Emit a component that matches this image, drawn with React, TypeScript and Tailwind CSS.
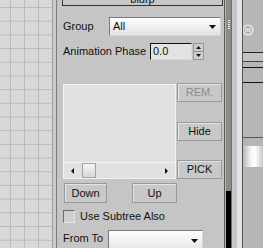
import React from 'react';

const DownArrow = ({ w = 7 }: { w?: number }) => (
  <svg width={w} height="4" viewBox="0 0 7 4">
    <path d="M0 0h7L3.5 4z" fill="#111" />
  </svg>
);

const Button = ({ label, disabled, className = '' }: { label: string; disabled?: boolean; className?: string }) => (
  <div
    className={`flex shrink-0 items-center justify-center border border-[#9a9a9a] bg-[#c8c8c8] shadow-[inset_1px_1px_0_#e4e4e4] ${
      disabled ? 'text-[#8c8c8c]' : 'text-[#111]'
    } ${className}`}
  >
    {label}
  </div>
);

const Dropdown = ({ text, className = '' }: { text?: string; className?: string }) => (
  <div
    className={`flex shrink-0 items-center justify-between border border-[#7a7a7a] border-r-[#d6d6d6] border-b-[#d6d6d6] bg-[linear-gradient(to_bottom,#fdfdfd,#e2e2e2)] pl-[3px] pr-[4px] ${className}`}
  >
    <span>{text}</span>
    <DownArrow />
  </div>
);

export default function App() {
  return (
    <div className="flex h-[248px] w-[263px] overflow-hidden bg-[#c5c5c5] font-['Liberation_Sans',Arial,sans-serif] text-[11px] leading-none text-[#111]">
      {/* viewport grid */}
      <div className="h-full w-[52px] shrink-0 bg-[#d8d8d8] bg-[linear-gradient(to_right,#bababa_1px,transparent_1px),linear-gradient(to_bottom,#bababa_1px,transparent_1px)] bg-[size:14px_13.7px] bg-[position:10px_7px]" />

      {/* splitter */}
      <div className="h-full w-[5px] shrink-0 border-l border-r border-l-[#9e9e9e] border-r-[#7c7c7c] bg-[#cbcbcb]" />

      {/* command panel */}
      <div className="flex w-[167px] shrink-0 flex-col pl-[5px] [&>*]:shrink-0">
        {/* rollout title */}
        <div className="-mt-[13px] flex h-[19px] w-[161px] items-end border border-[#333] bg-[#c8c8c8] px-[2px]">
          <span className="w-[8px] pb-[4px]">-</span>
          <span className="flex-1 text-center">blurp</span>
          <span className="w-[8px]" />
        </div>

        {/* group */}
        <div className="mt-[11px] flex items-center pl-[1px]">
          <span className="w-[46px]">Group</span>
          <Dropdown text="All" className="h-[19px] w-[112px]" />
        </div>

        {/* animation phase */}
        <div className="mt-[7px] flex items-center pl-[1px]">
          <span className="w-[87px]">Animation Phase</span>
          <div className="flex h-[17px] w-[42px] items-center border border-t-[#111] border-l-[#111] border-r-[#d8d8d8] border-b-[#d8d8d8] bg-[#e3e3e3] pl-[2px]">
            0.0
          </div>
          <div className="ml-[1px] flex h-[17px] w-[11px] flex-col border border-[#9a9a9a] bg-[#cdcdcd]">
            <div className="flex flex-1 items-center justify-center border-b border-[#8a8a8a]">
              <svg width="5" height="3" viewBox="0 0 5 3">
                <path d="M0 3h5L2.5 0z" fill="#111" />
              </svg>
            </div>
            <div className="flex flex-1 items-center justify-center">
              <svg width="5" height="3" viewBox="0 0 5 3">
                <path d="M0 0h5L2.5 3z" fill="#111" />
              </svg>
            </div>
          </div>
        </div>

        {/* list + side buttons */}
        <div className="mt-[23px] flex pl-[1px]">
          <div className="mt-[1px] flex h-[95px] w-[113px] flex-col border border-[#f2f2f2] bg-[#e1e1e1]">
            <div className="flex-1" />
            <div className="flex h-[16px] items-center border-t border-[#f4f4f4] px-[7px]">
              <svg width="3" height="6" viewBox="0 0 3 6">
                <path d="M3 0v6L0 3z" fill="#111" />
              </svg>
              <div className="ml-[8px] h-[15px] w-[14px] border border-[#a2a2a2] bg-[linear-gradient(to_bottom,#f6f6f6,#d6d6d6)]" />
              <div className="flex-1" />
              <svg width="3" height="6" viewBox="0 0 3 6">
                <path d="M0 0v6L3 3z" fill="#111" />
              </svg>
            </div>
          </div>
          <div className="ml-[1px] flex w-[45px] flex-col">
            <Button label="REM." disabled className="h-[19px]" />
            <Button label="Hide" className="mt-[20px] h-[19px]" />
            <Button label="PICK" className="mt-[19px] h-[19px]" />
          </div>
        </div>

        {/* down / up */}
        <div className="mt-[4px] flex pl-[2px]">
          <Button label="Down" className="h-[20px] w-[43px]" />
          <Button label="Up" className="ml-[25px] h-[20px] w-[45px]" />
        </div>

        {/* checkbox */}
        <div className="mt-[7px] flex items-center pl-[1px]">
          <div className="h-[13px] w-[12px] border border-t-[#6a6a6a] border-l-[#6a6a6a] border-r-[#e4e4e4] border-b-[#e4e4e4] bg-[#cfcfcf]" />
          <span className="ml-[5px]">Use Subtree Also</span>
        </div>

        {/* from to */}
        <div className="mt-[7px] flex items-start pl-[1px]">
          <span className="mt-[3px] w-[45px]">From To</span>
          <Dropdown className="h-[24px] w-[95px] items-start pt-[8px]" />
        </div>
      </div>

      {/* panel scrollbar */}
      <div className="h-full w-px shrink-0 bg-[#5c5c5c]" />
      <div className="h-full w-px shrink-0 bg-[#b4b4b4]" />
      <div className="flex h-full w-[5px] shrink-0 flex-col bg-[#8d8984]">
        <div className="mt-[20px] flex flex-col items-center gap-[1px]">
          <div className="h-px w-[2px] bg-[#eee]" />
          <div className="h-px w-[2px] bg-[#eee]" />
          <div className="h-px w-[2px] bg-[#eee]" />
          <div className="h-px w-[2px] bg-[#eee]" />
          <div className="h-px w-[2px] bg-[#eee]" />
        </div>
        <div className="flex-1" />
        <div className="h-[57px] bg-black" />
      </div>
      <div className="h-full w-px shrink-0 bg-[#6c6c6c]" />
      <div className="h-full w-[5px] shrink-0 bg-[#c6c6c6]" />
      <div className="h-full w-[5px] shrink-0 bg-[#dfe5eb]" />
      <div className="h-full w-px shrink-0 bg-[#555]" />

      {/* next panel */}
      <div className="flex h-full flex-1 flex-col bg-[#b6b6b6] [&>*]:shrink-0">
        <div className="mt-[23px] h-[14px]">
          <svg width="11" height="14" viewBox="0 0 11 14">
            <circle cx="5" cy="7" r="5" fill="none" stroke="#eee" strokeWidth="1.2" />
            <path d="M2 6h6M2 8h6" stroke="#eee" strokeWidth="1" />
          </svg>
        </div>
        <div className="mt-[15px] h-px bg-[#222]" />
        <div className="h-[8px] bg-[#c2c2c2]" />
        <div className="h-px bg-[#444]" />
        <div className="mt-[5px] h-px bg-[#111]" />
        <div className="mt-[14px] h-px bg-[#111]" />
        <div className="mt-[54px] h-px bg-[#555]" />
        <div className="mt-[8px] h-[21px] bg-[linear-gradient(to_right,#b8b8b8,#f6f6f6_40%,#ffffff_60%,#c8c8c8)]" />
      </div>
    </div>
  );
}
